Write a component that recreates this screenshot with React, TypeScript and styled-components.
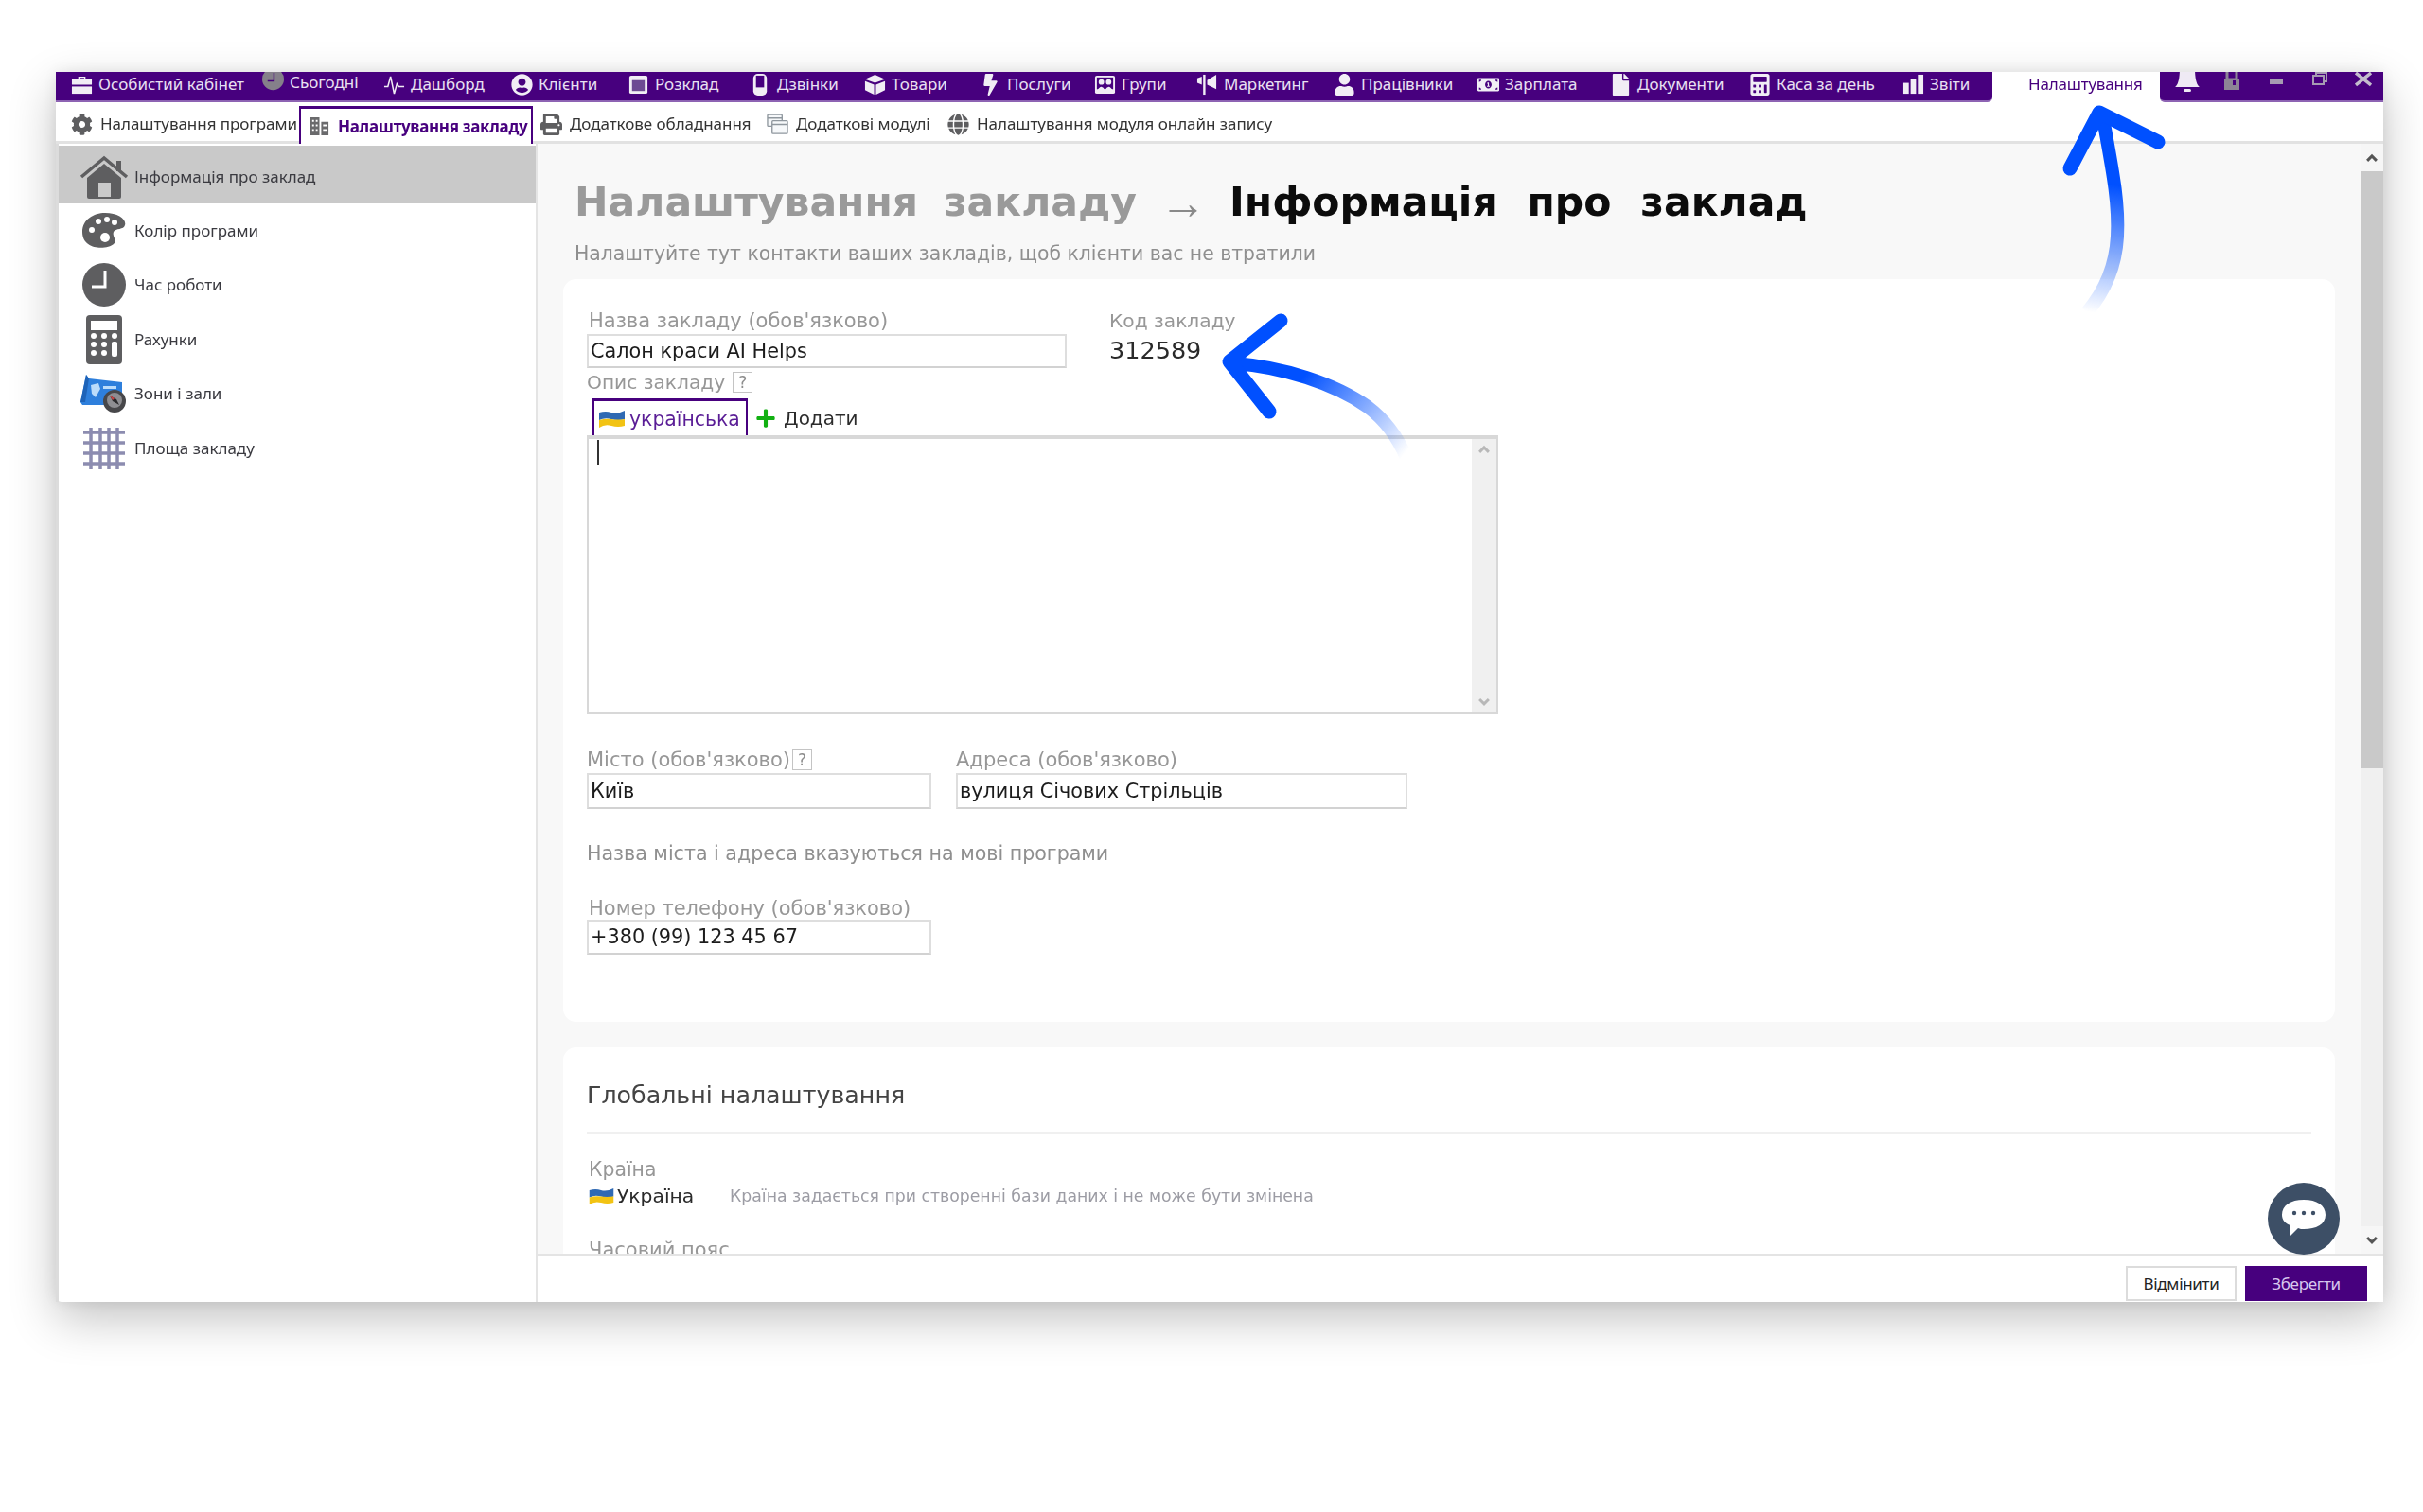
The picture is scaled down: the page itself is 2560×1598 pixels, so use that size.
import React from 'react';
import styled, { createGlobalStyle } from 'styled-components';
import {
  FaBolt,
  FaCalculator,
  FaCog,
  FaFile,
  FaGlobe,
  FaMoneyBillAlt,
  FaPlus,
  FaPrint,
  FaUser,
  FaUserCircle,
} from 'react-icons/fa';

const PURPLE = '#47007e';
const ICON_GREY = '#5e5e60';
const UI_FONT = '"Noto Sans", "Open Sans", sans-serif';
const FORM_FONT = '"DejaVu Sans", "Noto Sans", sans-serif';

const GlobalStyle = createGlobalStyle`
  html, body {
    margin: 0;
    background: #fff;
  }
  * {
    box-sizing: border-box;
  }
`;

const Page = styled.div`
  position: relative;
  width: 2560px;
  height: 1598px;
  padding: 76px 42px 0 59px;
  overflow: hidden;
  background: #fff;
`;

const Window = styled.div`
  width: 2459px;
  height: 1300px;
  display: flex;
  flex-direction: column;
  background: #fff;
  border-radius: 0 0 6px 6px;
  box-shadow: 0 18px 50px rgba(0, 0, 0, 0.24), 0 0 14px rgba(0, 0, 0, 0.08);
`;

/* the reference is an upscaled capture, so the inside is a little soft */
const Soft = styled.div`
  flex: 1;
  min-height: 0;
  display: flex;
  flex-direction: column;
  filter: blur(0.7px);
`;

const TopBar = styled.div`
  flex: 0 0 32px;
  display: flex;
  overflow: hidden;
`;

const MenuBar = styled.div`
  flex: 0 0 2046px;
  display: flex;
  align-items: center;
  padding: 0 0 4px 16px;
  background: ${PURPLE};
  border-bottom: 2px solid #8d63b3;
  border-radius: 0 0 5px 0;
  overflow: hidden;
`;

const MenuItem = styled.div<{ $w: number; $raised?: boolean }>`
  flex: 0 0 ${(p) => p.$w}px;
  display: flex;
  align-items: center;
  gap: 6px;
  height: 20px;
  margin-bottom: ${(p) => (p.$raised ? '5px' : '0')};
  color: #e9e0f2;
  font: 17px/20px ${UI_FONT};
  letter-spacing: 0;
  white-space: nowrap;
  svg {
    flex: 0 0 23px;
    width: 23px;
    height: 23px;
  }
`;

const SettingsTab = styled.div`
  flex: 0 0 177px;
  padding: 0 0 4px 38px;
  color: ${PURPLE};
  font: 17px/26px ${UI_FONT};
  letter-spacing: -0.2px;
  white-space: nowrap;
`;

const Controls = styled.div`
  flex: 1;
  display: flex;
  align-items: flex-start;
  padding-left: 16px;
  background: ${PURPLE};
  border-bottom: 2px solid #8d63b3;
  border-radius: 0 0 0 5px;
  svg {
    display: block;
  }
`;

const ControlSlot = styled.div<{ $w: number }>`
  flex: 0 0 ${(p) => p.$w}px;
`;

const TabBar = styled.div`
  flex: 0 0 44px;
  display: flex;
  align-items: flex-end;
  padding-left: 16px;
  border-bottom: 3px solid #e2e2e2;
`;

const TabItem = styled.div<{ $w?: number; $active?: boolean }>`
  ${(p) => (p.$w ? `flex: 0 0 ${p.$w}px;` : '')}
  height: ${(p) => (p.$active ? '40px' : '41px')};
  display: flex;
  align-items: center;
  gap: 8px;
  margin: ${(p) => (p.$active ? '0 8px -3px 0' : '0')};
  padding: ${(p) => (p.$active ? '0 0 0 8px' : '5px 0 0 0')};
  color: ${(p) => (p.$active ? PURPLE : '#333')};
  background: #fff;
  border: ${(p) => (p.$active ? `2px solid ${PURPLE}` : 'none')};
  border-top-width: ${(p) => (p.$active ? '3px' : '0')};
  border-bottom: none;
  font: ${(p) => (p.$active ? 700 : 400)} 17px/24px ${UI_FONT};
  letter-spacing: ${(p) => (p.$active ? '-0.3px' : '-0.05px')};
  white-space: nowrap;
  svg {
    flex: 0 0 23px;
    width: 23px;
    height: 23px;
    color: ${ICON_GREY};
  }
`;

const Body = styled.div`
  flex: 1;
  min-height: 0;
  display: flex;
`;

const Sidebar = styled.div`
  flex: 0 0 509px;
  padding-top: 2px;
  border-left: 3px solid #dcdcdc;
  border-right: 2px solid #e4e4e4;
`;

const SideRow = styled.div<{ $active?: boolean }>`
  height: ${(p) => (p.$active ? '61px' : '57.5px')};
  display: flex;
  align-items: center;
  padding: ${(p) => (p.$active ? '4px 0 0 22px' : '0 0 0 22px')};
  background: ${(p) => (p.$active ? '#c9c9c9' : '#fff')};
  color: #3a3a40;
  font: 17px/24px ${UI_FONT};
  letter-spacing: 0;
`;

const SideIcon = styled.div`
  flex: 0 0 52px;
  margin-right: 6px;
  display: flex;
  align-items: center;
  justify-content: center;
`;

const Main = styled.div`
  position: relative;
  flex: 1;
  min-width: 0;
  display: flex;
  flex-direction: column;
`;

const Scroller = styled.div`
  flex: 1;
  min-height: 0;
  display: flex;
`;

const Content = styled.div`
  flex: 1;
  min-width: 0;
  padding: 32px 0 0 27px;
  background: #f8f8f8;
  overflow: hidden;
`;

const Title = styled.h1`
  display: flex;
  align-items: center;
  margin: 0 0 0 12px;
  height: 60px;
  color: #9a9a9a;
  font: 700 42.5px/60px ${FORM_FONT};
  word-spacing: 12px;
  white-space: nowrap;
`;

const TitleArrow = styled.span`
  width: 98px;
  text-align: center;
  color: #8a8a8a;
  font: 400 49px/60px "Liberation Sans", sans-serif;
`;

const TitleCurrent = styled.span`
  color: #0c0c0c;
  word-spacing: 16px;
`;

const Subtitle = styled.div`
  margin: 9px 0 0 12px;
  color: #8f8f8f;
  font: 20.4px/30px ${FORM_FONT};
  white-space: nowrap;
`;

const Card = styled.section<{ $h?: number; $mt: number }>`
  width: 1872px;
  ${(p) => (p.$h ? `height: ${p.$h}px;` : 'height: 300px;')}
  margin-top: ${(p) => p.$mt}px;
  padding: 32px 25px 0;
  background: #fff;
  border-radius: 14px;
`;

const FieldRow = styled.div<{ $mt?: number; $gap: number }>`
  display: flex;
  gap: ${(p) => p.$gap}px;
  margin-top: ${(p) => p.$mt ?? 0}px;
`;

const Field = styled.div<{ $w: number }>`
  flex: 0 0 ${(p) => p.$w}px;
  width: ${(p) => p.$w}px;
`;

const Label = styled.div<{ $indent?: number; $mt?: number; $size?: number }>`
  display: flex;
  align-items: center;
  height: 24px;
  margin: ${(p) => p.$mt ?? 0}px 0 0 ${(p) => p.$indent ?? 0}px;
  color: #979797;
  font: ${(p) => p.$size ?? 21}px/24px ${FORM_FONT};
  white-space: nowrap;
`;

const HelpBox = styled.span<{ $ml: number }>`
  width: 21px;
  height: 22px;
  margin-left: ${(p) => p.$ml}px;
  border: 1px solid #c4c4c4;
  color: #8d8d8d;
  font: 17px/20px ${FORM_FONT};
  text-align: center;
`;

const TextBox = styled.div<{ $h: number; $mt: number }>`
  height: ${(p) => p.$h}px;
  margin-top: ${(p) => p.$mt}px;
  padding: 0 2px;
  border: 2px solid #dedede;
  border-bottom-color: #d2d2d2;
  color: #1c1c1c;
  font: 20.8px/${(p) => p.$h - 4}px ${FORM_FONT};
  white-space: nowrap;
`;

const CodeValue = styled.div`
  margin-top: 1px;
  color: #2a2a2a;
  font: 25.5px/36px ${FORM_FONT};
`;

const LangRow = styled.div`
  display: flex;
  align-items: center;
  height: 39px;
  margin: 5px 0 0 6px;
`;

const LangTab = styled.div`
  flex: 0 0 164px;
  height: 39px;
  display: flex;
  align-items: center;
  gap: 5px;
  padding: 2px 0 0 5px;
  border: 2px solid ${PURPLE};
  border-top-width: 3px;
  border-bottom: none;
  color: #5a1d96;
  font: 20.4px/34px ${FORM_FONT};
`;

const AddLang = styled.div`
  display: flex;
  align-items: center;
  gap: 8px;
  margin-left: 8px;
  padding-top: 2px;
  color: #2c2c2c;
  font: 20px/34px ${FORM_FONT};
  svg {
    color: #12b012;
  }
`;

const DescriptionBox = styled.div`
  position: relative;
  width: 963px;
  height: 295px;
  display: flex;
  border: 2px solid #d8d8d8;
  border-top-width: 4px;
`;

const Caret = styled.div`
  position: absolute;
  top: 1px;
  left: 9px;
  width: 2px;
  height: 26px;
  background: #333;
`;

const InnerTrack = styled.div`
  margin-left: auto;
  flex: 0 0 26px;
  display: flex;
  flex-direction: column;
  justify-content: space-between;
  align-items: center;
  padding: 6px 0;
  background: #f0f0f0;
`;

const Hint = styled.div`
  height: 24px;
  margin-top: 35px;
  color: #8f8f8f;
  font: 20.6px/24px ${FORM_FONT};
  white-space: nowrap;
`;

const SectionTitle = styled.h2`
  margin: 2px 0 0;
  color: #444;
  font: 400 25.3px/34px ${FORM_FONT};
`;

const Divider = styled.div`
  height: 2px;
  margin-top: 21px;
  background: #f0f0f0;
`;

const CountryRow = styled.div`
  display: flex;
  align-items: center;
  height: 24px;
  margin: 4px 0 0 2px;
`;

const CountryName = styled.div`
  flex: 0 0 149px;
  display: flex;
  align-items: center;
  gap: 3px;
  color: #2a2a2a;
  font: 20.3px/24px ${FORM_FONT};
`;

const CountryNote = styled.div`
  color: #9c9ca4;
  font: 17.3px/24px ${FORM_FONT};
  white-space: nowrap;
`;

const ScrollTrack = styled.div`
  flex: 0 0 24px;
  display: flex;
  flex-direction: column;
  background: #f0f0f0;
`;

const ScrollButton = styled.div<{ $end?: boolean }>`
  flex: 0 0 29px;
  display: flex;
  align-items: center;
  justify-content: center;
  margin-top: ${(p) => (p.$end ? 'auto' : '0')};
  background: #f6f6f6;
`;

const ScrollThumb = styled.div<{ $h: number }>`
  flex: 0 0 ${(p) => p.$h}px;
  background: #c9c9c9;
`;

const Footer = styled.div`
  flex: 0 0 51px;
  display: flex;
  justify-content: flex-end;
  gap: 9px;
  padding: 11px 17px 0 0;
  border-top: 2px solid #e4e4e4;
  background: #fff;
`;

const Button = styled.div<{ $w: number; $primary?: boolean }>`
  flex: 0 0 ${(p) => p.$w}px;
  height: 37px;
  text-align: center;
  background: ${(p) => (p.$primary ? PURPLE : '#fff')};
  border: 2px solid ${(p) => (p.$primary ? PURPLE : '#dcdcdc')};
  color: ${(p) => (p.$primary ? '#d9c8ee' : '#222')};
  font: 17px/33px ${UI_FONT};
  letter-spacing: -0.3px;
`;

const ChatButton = styled.div`
  position: absolute;
  right: 46px;
  bottom: 50px;
  width: 76px;
  height: 76px;
  display: flex;
  align-items: center;
  justify-content: center;
  border-radius: 50%;
  background: #3d4f66;
`;

const ArrowLayer = styled.svg<{ $x: number; $y: number; $w: number; $h: number }>`
  position: absolute;
  left: ${(p) => p.$x}px;
  top: ${(p) => p.$y}px;
  width: ${(p) => p.$w}px;
  height: ${(p) => p.$h}px;
  pointer-events: none;
`;

const Flag = ({ w, h }: { w: number; h: number }) => (
  <svg width={w} height={h} viewBox="0 0 27 18" style={{ flex: `0 0 ${w}px` }}>
    <path d="M0 2 Q7 0 13 2 T27 0 V9 Q20 11 13 9 T0 10Z" fill="#2f69b3" />
    <path d="M0 10 Q7 8 13 9 T27 9 V16 Q20 18 13 16 T0 18Z" fill="#f2c313" />
  </svg>
);

const Chevron = ({ up, color = '#666', size = 14 }: { up?: boolean; color?: string; size?: number }) => (
  <svg width={size} height={size * 0.7} viewBox="0 0 14 10">
    <path d={up ? 'M2 8 L7 3 L12 8' : 'M2 2 L7 7 L12 2'} fill="none" stroke={color} strokeWidth="3" />
  </svg>
);

const white = '#f1edf5';

const BriefcaseIcon = () => (
  <svg viewBox="0 0 24 24" fill={white}>
    <path d="M8 6 V3 H16 V6 H14.5 V4.5 H9.5 V6Z" />
    <path d="M1 6 H23 V12 H1Z" />
    <path d="M1 14 H23 V22 H1Z" />
  </svg>
);
const TodayIcon = () => (
  <svg viewBox="0 0 24 24">
    <circle cx="12" cy="9" r="12" fill="#85808a" />
    <path d="M13 2 V11 H6" fill="none" stroke="#47007e" strokeWidth="1.5" />
  </svg>
);
const PulseIcon = () => (
  <svg viewBox="0 0 24 24">
    <path d="M1 14 L5 14 L8 3 L12 22 L15 11 L17 14 L23 14" fill="none" stroke={white} strokeWidth="1.6" />
  </svg>
);
const CalendarIcon = () => (
  <svg viewBox="0 0 24 24">
    <rect x="2" y="2" width="20" height="20" rx="2" fill={white} />
    <rect x="5" y="7" width="14" height="12" fill="#6d4a93" />
  </svg>
);
const PhoneIcon = () => (
  <svg viewBox="0 0 24 24">
    <rect x="4" y="0" width="15" height="24" rx="5" fill={white} />
    <rect x="7" y="2" width="9" height="13" fill="#47007e" />
  </svg>
);
const BoxIcon = () => (
  <svg viewBox="0 0 24 24" fill={white}>
    <path d="M12 1 L23 6 L12 10 L1 6Z" />
    <path d="M1 8 L11 12 V23 L1 18Z" />
    <path d="M23 8 L13 12 V23 L23 18Z" />
  </svg>
);
const GroupIcon = () => (
  <svg viewBox="0 0 24 24">
    <rect x="1" y="2" width="22" height="20" rx="2" fill={white} />
    <rect x="3" y="4" width="18" height="13" fill="#47007e" />
    <circle cx="8" cy="9" r="3" fill={white} />
    <circle cx="16" cy="9" r="3" fill={white} />
    <path d="M3 19 Q8 10 12 18 Q16 10 21 19Z" fill={white} />
  </svg>
);
const SpeakersIcon = () => (
  <svg viewBox="0 0 24 24" fill={white}>
    <path d="M1 5 L6 3 V12 L1 10Z" />
    <rect x="7.5" y="1" width="2.5" height="22" />
    <path d="M12 7 L22 1 V17 L12 12Z" />
  </svg>
);
const BarsIcon = () => (
  <svg viewBox="0 0 24 24" fill={white}>
    <rect x="1" y="10" width="6" height="12" />
    <rect x="9" y="6" width="6" height="16" />
    <rect x="17" y="1" width="6" height="21" />
  </svg>
);
const BuildingIcon = () => (
  <svg viewBox="0 0 24 24" fill="#6a6a6c">
    <path d="M2 2 H12 V22 H2Z M4 5 V7 H6 V5Z M8 5 V7 H10 V5Z M4 10 V12 H6 V10Z M8 10 V12 H10 V10Z M4 15 V17 H6 V15Z M8 15 V17 H10 V15Z" fillRule="evenodd" />
    <path d="M14 7 H22 V22 H14Z M16 10 V12 H20 V10Z M16 15 V17 H20 V15Z" fillRule="evenodd" />
  </svg>
);
const WindowsIcon = () => (
  <svg viewBox="0 0 24 24" fill="#f6f8fa" stroke="#8f979e" strokeWidth="1.4">
    <rect x="1" y="1" width="16" height="13" rx="1" />
    <rect x="6" y="8" width="17" height="14" rx="1" />
    <path d="M6 12 H23 M1 5 H17" />
  </svg>
);

const HouseIcon = () => (
  <svg width="52" height="46" viewBox="0 0 52 46">
    <path d="M2 23 L26 3 L50 23" fill="none" stroke={ICON_GREY} strokeWidth="3.5" />
    <rect x="39" y="6" width="5" height="11" fill={ICON_GREY} />
    <path d="M8 24 L26 9 L44 24 V44 Q44 46 42 46 H10 Q8 46 8 44Z" fill={ICON_GREY} />
    <rect x="20" y="29" width="13" height="15" fill="#c9c9c9" />
  </svg>
);
const PaletteIcon = () => (
  <svg width="46" height="38" viewBox="0 0 46 38">
    <path d="M24 0 C38 0 47 7 45 13 C44 18 35 16 33 20 C31 26 38 28 33 33 C26 39 0 40 0 20 C0 7 12 0 24 0Z" fill={ICON_GREY} />
    <circle cx="10" cy="18" r="3" fill="#fff" />
    <circle cx="17" cy="9" r="3" fill="#fff" />
    <circle cx="26" cy="7" r="3" fill="#fff" />
    <circle cx="34" cy="10" r="3" fill="#fff" />
    <circle cx="24" cy="26" r="5" fill="#fff" />
  </svg>
);
const ClockIcon = () => (
  <svg width="46" height="46" viewBox="0 0 46 46">
    <circle cx="23" cy="23" r="23" fill={ICON_GREY} />
    <path d="M24 8 V25 H10" fill="none" stroke="#fff" strokeWidth="3" />
  </svg>
);
const CalcIcon = () => (
  <svg width="38" height="52" viewBox="0 0 38 52">
    <rect width="38" height="52" rx="4" fill={ICON_GREY} />
    <rect x="5" y="6" width="28" height="10" fill="#fff" />
    {[22, 31, 40].map((y) =>
      [8, 19].map((x) => <circle key={`${x}-${y}`} cx={x} cy={y} r="3" fill="#fff" />),
    )}
    <circle cx="30" cy="22" r="3" fill="#fff" />
    <rect x="27" y="28" width="6" height="16" rx="2" fill="#fff" />
  </svg>
);
const ZonesIcon = () => (
  <svg width="50" height="40" viewBox="0 0 50 40">
    <path d="M6 0 L9 4 L44 8 V32 L2 32 L0 29Z" fill="#2e7fdc" />
    <path d="M6 0 L9 4 L5 29 L0 29Z" fill="#1e63b8" />
    <path d="M11 11 L19 9 L21 15 L16 24 L12 20Z" fill="#bcdcfa" />
    <rect x="24" y="12" width="14" height="3" fill="#bcdcfa" />
    <circle cx="36" cy="28" r="12" fill="#47474a" />
    <circle cx="36" cy="27" r="8" fill="#8e8e92" />
    <path d="M31 22 L38 26 L41 32 L34 28Z" fill="#2a2a2c" />
    <path d="M31 22 L36 25 L34 27Z" fill="#c44" />
  </svg>
);
const GridIcon = () => (
  <svg width="44" height="44" viewBox="0 0 44 44" stroke="#8c8cb0" strokeWidth="3.5">
    <path d="M8 0 V44 M18 0 V44 M27 0 V44 M36 0 V44" />
    <path d="M0 5 H44 M0 16 H44 M0 27 H44 M0 38 H44" />
  </svg>
);

const BellControl = () => (
  <svg width="26" height="28" viewBox="0 0 26 28" fill="#efeaf4">
    <path d="M5 -4 H21 C21 8 23 14 26 16 H0 C3 14 5 8 5 -4Z" />
    <rect x="9" y="18" width="8" height="3" rx="1.5" />
  </svg>
);
const LockControl = () => (
  <svg width="16" height="26" viewBox="0 0 16 26">
    <path d="M3 -4 V8 H13 V-4" fill="none" stroke="#8d8496" strokeWidth="3" />
    <rect x="0" y="7" width="16" height="12" fill="#8d8496" />
    <rect x="9" y="9" width="3" height="5" fill="#47007e" />
  </svg>
);
const MinusControl = () => (
  <svg width="14" height="22" viewBox="0 0 14 22">
    <rect y="8" width="14" height="5" fill="#a69bb2" />
  </svg>
);
const RestoreControl = () => (
  <svg width="16" height="18" viewBox="0 0 16 18" fill="none" stroke="#a69bb2" strokeWidth="2">
    <rect x="1" y="4" width="11" height="9" />
    <path d="M4 4 V1 H15 V10 H12" />
  </svg>
);
const CloseControl = () => (
  <svg width="18" height="20" viewBox="0 0 18 20" fill="none" stroke="#c4bccd" strokeWidth="3.4">
    <path d="M1 1 L17 14 M17 1 L1 14" />
  </svg>
);

const menuItems: { w: number; label: string; icon: React.ReactNode; raised?: boolean }[] = [
  { w: 202, label: 'Особистий кабінет', icon: <BriefcaseIcon /> },
  { w: 128, label: 'Сьогодні', icon: <TodayIcon />, raised: true },
  { w: 135, label: 'Дашборд', icon: <PulseIcon /> },
  { w: 123, label: 'Клієнти', icon: <FaUserCircle color={white} /> },
  { w: 129, label: 'Розклад', icon: <CalendarIcon /> },
  { w: 121, label: 'Дзвінки', icon: <PhoneIcon /> },
  { w: 122, label: 'Товари', icon: <BoxIcon /> },
  { w: 121, label: 'Послуги', icon: <FaBolt color={white} /> },
  { w: 108, label: 'Групи', icon: <GroupIcon /> },
  { w: 145, label: 'Маркетинг', icon: <SpeakersIcon /> },
  { w: 152, label: 'Працівники', icon: <FaUser color={white} /> },
  { w: 140, label: 'Зарплата', icon: <FaMoneyBillAlt color={white} /> },
  { w: 147, label: 'Документи', icon: <FaFile color={white} /> },
  { w: 162, label: 'Каса за день', icon: <FaCalculator color={white} /> },
  { w: 90, label: 'Звіти', icon: <BarsIcon /> },
];

const sideItems: { label: string; icon: React.ReactNode; active?: boolean }[] = [
  { label: 'Інформація про заклад', icon: <HouseIcon />, active: true },
  { label: 'Колір програми', icon: <PaletteIcon /> },
  { label: 'Час роботи', icon: <ClockIcon /> },
  { label: 'Рахунки', icon: <CalcIcon /> },
  { label: 'Зони і зали', icon: <ZonesIcon /> },
  { label: 'Площа закладу', icon: <GridIcon /> },
];

const App: React.FC = () => (
  <Page>
    <GlobalStyle />
    <Window>
      <Soft>
        <TopBar>
          <MenuBar>
            {menuItems.map((item) => (
              <MenuItem key={item.label} $w={item.w} $raised={item.raised}>
                {item.icon}
                {item.label}
              </MenuItem>
            ))}
          </MenuBar>
          <SettingsTab>Налаштування</SettingsTab>
          <Controls>
            <ControlSlot $w={52}>
              <BellControl />
            </ControlSlot>
            <ControlSlot $w={48}>
              <LockControl />
            </ControlSlot>
            <ControlSlot $w={45}>
              <MinusControl />
            </ControlSlot>
            <ControlSlot $w={45}>
              <RestoreControl />
            </ControlSlot>
            <ControlSlot $w={30}>
              <CloseControl />
            </ControlSlot>
          </Controls>
        </TopBar>

        <TabBar>
          <TabItem $w={241}>
            <FaCog />
            Налаштування програми
          </TabItem>
          <TabItem $w={247} $active>
            <BuildingIcon />
            Налаштування закладу
          </TabItem>
          <TabItem $w={239}>
            <FaPrint />
            Додаткове обладнання
          </TabItem>
          <TabItem $w={191}>
            <WindowsIcon />
            Додаткові модулі
          </TabItem>
          <TabItem>
            <FaGlobe />
            Налаштування модуля онлайн запису
          </TabItem>
        </TabBar>

        <Body>
          <Sidebar>
            {sideItems.map((item) => (
              <SideRow key={item.label} $active={item.active}>
                <SideIcon>{item.icon}</SideIcon>
                {item.label}
              </SideRow>
            ))}
          </Sidebar>

          <Main>
            <Scroller>
              <Content>
                <Title>
                  Налаштування закладу
                  <TitleArrow>→</TitleArrow>
                  <TitleCurrent>Інформація про заклад</TitleCurrent>
                </Title>
                <Subtitle>Налаштуйте тут контакти ваших закладів, щоб клієнти вас не втратили</Subtitle>

                <Card $h={785} $mt={12}>
                  <FieldRow $gap={45}>
                    <Field $w={507}>
                      <Label $indent={2}>Назва закладу (обов'язково)</Label>
                      <TextBox $h={36} $mt={2}>
                        Салон краси AI Helps
                      </TextBox>
                    </Field>
                    <Field $w={200}>
                      <Label $size={20.2}>Код закладу</Label>
                      <CodeValue>312589</CodeValue>
                    </Field>
                  </FieldRow>

                  <Label $mt={3} $size={20.2}>
                    Опис закладу
                    <HelpBox $ml={8}>?</HelpBox>
                  </Label>
                  <LangRow>
                    <LangTab>
                      <Flag w={27} h={18} />
                      українська
                    </LangTab>
                    <AddLang>
                      <FaPlus size={22} />
                      Додати
                    </AddLang>
                  </LangRow>
                  <DescriptionBox>
                    <Caret />
                    <InnerTrack>
                      <Chevron up color="#b8b8b8" />
                      <Chevron color="#b8b8b8" />
                    </InnerTrack>
                  </DescriptionBox>

                  <FieldRow $gap={26} $mt={36}>
                    <Field $w={364}>
                      <Label>
                        Місто (обов'язково)
                        <HelpBox $ml={2}>?</HelpBox>
                      </Label>
                      <TextBox $h={38} $mt={2}>
                        Київ
                      </TextBox>
                    </Field>
                    <Field $w={477}>
                      <Label>Адреса (обов'язково)</Label>
                      <TextBox $h={38} $mt={2}>
                        вулиця Січових Стрільців
                      </TextBox>
                    </Field>
                  </FieldRow>

                  <Hint>Назва міста і адреса вказуються на мові програми</Hint>

                  <Field $w={364}>
                    <Label $indent={2} $mt={34}>
                      Номер телефону (обов'язково)
                    </Label>
                    <TextBox $h={37} $mt={0}>
                      +380 (99) 123 45 67
                    </TextBox>
                  </Field>
                </Card>

                <Card $mt={27}>
                  <SectionTitle>Глобальні налаштування</SectionTitle>
                  <Divider />
                  <Label $indent={2} $mt={26} $size={20.4}>
                    Країна
                  </Label>
                  <CountryRow>
                    <CountryName>
                      <Flag w={27} h={17} />
                      Україна
                    </CountryName>
                    <CountryNote>Країна задається при створенні бази даних і не може бути змінена</CountryNote>
                  </CountryRow>
                  <Label $indent={2} $mt={33}>
                    Часовий пояс
                  </Label>
                </Card>
              </Content>

              <ScrollTrack>
                <ScrollButton>
                  <Chevron up color="#555" />
                </ScrollButton>
                <ScrollThumb $h={631} />
                <ScrollButton $end>
                  <Chevron color="#555" />
                </ScrollButton>
              </ScrollTrack>
            </Scroller>

            <Footer>
              <Button $w={117}>Відмінити</Button>
              <Button $w={129} $primary>
                Зберегти
              </Button>
            </Footer>

            <ChatButton>
              <svg width="48" height="44" viewBox="0 0 48 44">
                <path
                  d="M24 2 C38 2 47 8 47 18 C47 28 37 33 24 33 C22 33 20 33 18 32 L10 40 L10 29 C4 27 1 23 1 18 C1 8 10 2 24 2Z"
                  fill="#fff"
                />
                <circle cx="14" cy="16" r="2.2" fill="#3d4f66" />
                <circle cx="24" cy="16" r="2.2" fill="#3d4f66" />
                <circle cx="34" cy="16" r="2.2" fill="#3d4f66" />
              </svg>
            </ChatButton>
          </Main>
        </Body>
      </Soft>
    </Window>

    <ArrowLayer $x={2170} $y={100} $w={130} $h={240} viewBox="2170 100 130 240">
      <defs>
        <linearGradient id="arrowUp" gradientUnits="userSpaceOnUse" x1="2230" y1="195" x2="2210" y2="330">
          <stop offset="0" stopColor="#0050ff" />
          <stop offset="1" stopColor="#0050ff" stopOpacity="0" />
        </linearGradient>
      </defs>
      <path d="M2222 125 C2232 180 2239 215 2237 250 C2235 285 2222 310 2205 330" fill="none" stroke="url(#arrowUp)" strokeWidth="14" />
      <path d="M2187 178 L2218 119 L2280 150" fill="none" stroke="#0050ff" strokeWidth="15" strokeLinecap="round" strokeLinejoin="round" />
    </ArrowLayer>

    <ArrowLayer $x={1285} $y={325} $w={210} $h={170} viewBox="1285 325 210 170">
      <defs>
        <linearGradient id="arrowLeft" gradientUnits="userSpaceOnUse" x1="1380" y1="395" x2="1482" y2="482">
          <stop offset="0" stopColor="#0050ff" />
          <stop offset="1" stopColor="#0050ff" stopOpacity="0" />
        </linearGradient>
      </defs>
      <path d="M1305 384 C1355 388 1410 405 1445 430 C1465 445 1478 465 1486 484" fill="none" stroke="url(#arrowLeft)" strokeWidth="14" />
      <path d="M1353 339 L1299 382 L1341 435" fill="none" stroke="#0050ff" strokeWidth="15" strokeLinecap="round" strokeLinejoin="round" />
    </ArrowLayer>
  </Page>
);

export default App;
